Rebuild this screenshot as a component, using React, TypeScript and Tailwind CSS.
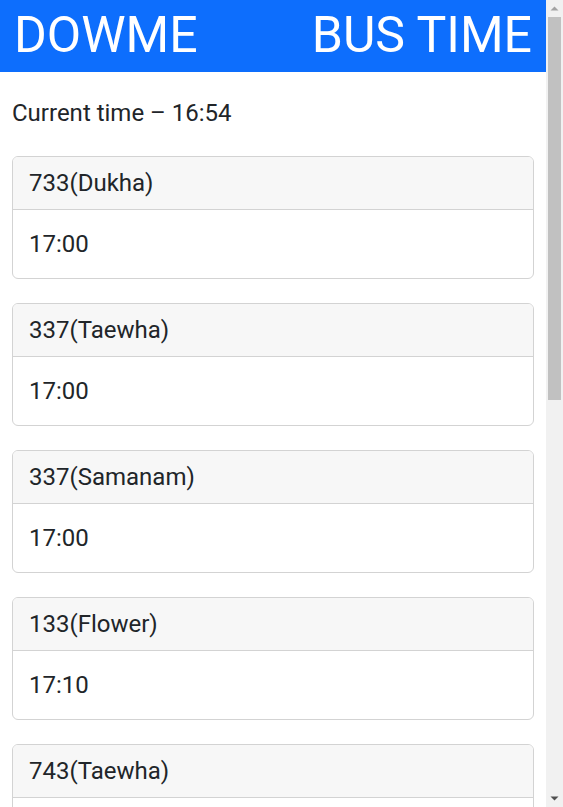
import React from "react";

const buses = [
  ["733(Dukha)", "17:00"],
  ["337(Taewha)", "17:00"],
  ["337(Samanam)", "17:00"],
  ["133(Flower)", "17:10"],
  ["743(Taewha)", "17:10"],
];

function Scrollbar() {
  return (
    <div className="flex h-full w-[17px] shrink-0 flex-col bg-[#f1f1f1]">
      <div className="flex h-[17px] items-center justify-center">
        <svg width="9" height="5" viewBox="0 0 9 5">
          <path d="M0.5 4.5 L4.5 0.5 L8.5 4.5 Z" fill="#a3a3a3" />
        </svg>
      </div>
      <div className="flex-1 px-[2px]">
        <div className="h-[383px] bg-[#c1c1c1]" />
      </div>
      <div className="flex h-[17px] items-center justify-center">
        <svg width="9" height="5" viewBox="0 0 9 5">
          <path d="M0.5 0.5 L8.5 0.5 L4.5 4.5 Z" fill="#505050" />
        </svg>
      </div>
    </div>
  );
}

export default function App() {
  return (
    <div className="flex h-[807px] w-full overflow-hidden bg-white text-[#212529]" style={{ fontFamily: "Roboto, 'Liberation Sans', sans-serif" }}>
      <div className="min-w-0 flex-1 overflow-hidden">
        <div className="flex h-[72px] items-center justify-between bg-[#0d6efd] px-[14px] pb-[2px] text-[50px] leading-none text-white">
          <span>DOWME</span>
          <span>BUS TIME</span>
        </div>
        <div className="px-3">
          <p className="mt-[23px] mb-[25px] text-[24px] leading-[36px]">Current time – 16:54</p>
          <div className="flex flex-col gap-6">
            {buses.map(([name, time], i) => (
              <div key={i} className="overflow-hidden rounded-[6px] border border-[#d3d3d3]">
                <div className="border-b border-[#d3d3d3] bg-[#f7f7f7] px-4 py-2 text-[24px] leading-[36px]">{name}</div>
                <div className="p-4 text-[24px] leading-[36px]">{time}</div>
              </div>
            ))}
          </div>
        </div>
      </div>
      <Scrollbar />
    </div>
  );
}
